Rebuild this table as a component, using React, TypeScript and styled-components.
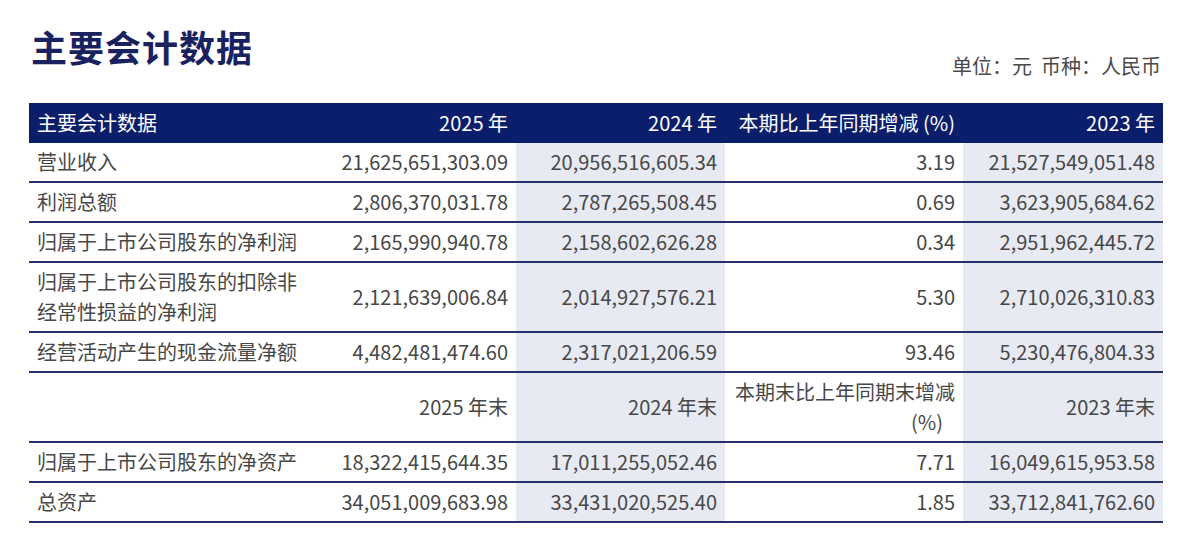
import React from "react";
import styled, { createGlobalStyle } from "styled-components";

const GlobalStyle = createGlobalStyle`
  html, body {
    margin: 0;
    padding: 0;
    background: #ffffff;
  }
  body {
    font-family: "Noto Sans CJK SC", "Noto Sans", sans-serif;
  }
`;

type Row = {
  label: string;
  values: [string, string, string, string];
  kind?: "sub";
};

const rows: Row[] = [
  { label: "营业收入", values: ["21,625,651,303.09", "20,956,516,605.34", "3.19", "21,527,549,051.48"] },
  { label: "利润总额", values: ["2,806,370,031.78", "2,787,265,508.45", "0.69", "3,623,905,684.62"] },
  { label: "归属于上市公司股东的净利润", values: ["2,165,990,940.78", "2,158,602,626.28", "0.34", "2,951,962,445.72"] },
  {
    label: "归属于上市公司股东的扣除非经常性损益的净利润",
    values: ["2,121,639,006.84", "2,014,927,576.21", "5.30", "2,710,026,310.83"],
  },
  { label: "经营活动产生的现金流量净额", values: ["4,482,481,474.60", "2,317,021,206.59", "93.46", "5,230,476,804.33"] },
  { label: "", values: ["2025 年末", "2024 年末", "本期末比上年同期末增减", "2023 年末"], kind: "sub" },
  { label: "归属于上市公司股东的净资产", values: ["18,322,415,644.35", "17,011,255,052.46", "7.71", "16,049,615,953.58"] },
  { label: "总资产", values: ["34,051,009,683.98", "33,431,020,525.40", "1.85", "33,712,841,762.60"] },
];

// shaded columns: 2024 and 2023
const shaded = [false, true, false, true];

export default function App() {
  return (
    <>
      <GlobalStyle />
      <Page>
        <TopBar>
          <Title>主要会计数据</Title>
          <UnitNote>单位：元&nbsp;&nbsp;币种：人民币</UnitNote>
        </TopBar>

        <DataTable>
          <colgroup>
            <col style={{ width: 286 }} />
            <col style={{ width: 201 }} />
            <col style={{ width: 209 }} />
            <col style={{ width: 238 }} />
            <col style={{ width: 200 }} />
          </colgroup>
          <thead>
            <tr>
              <HeadCell $align="left">主要会计数据</HeadCell>
              <HeadCell>2025 年</HeadCell>
              <HeadCell>2024 年</HeadCell>
              <HeadCell>本期比上年同期增减 (%)</HeadCell>
              <HeadCell>2023 年</HeadCell>
            </tr>
          </thead>
          <tbody>
            {rows.map((r, i) => (
              <tr key={i}>
                <LabelCell>{r.label}</LabelCell>
                {r.values.map((v, j) => (
                  <ValueCell key={j} $shaded={shaded[j]}>
                    {r.kind === "sub" && j === 2 ? (
                      <>
                        {v} <PctMark>(%)</PctMark>
                      </>
                    ) : (
                      v
                    )}
                  </ValueCell>
                ))}
              </tr>
            ))}
          </tbody>
        </DataTable>
      </Page>
    </>
  );
}

const Page = styled.div`
  width: 1192px;
  height: 539px;
  padding: 0 29px;
  box-sizing: border-box;
  overflow: hidden;
`;

const TopBar = styled.div`
  display: flex;
  justify-content: space-between;
  align-items: flex-end;
`;

const Title = styled.h1`
  margin: 24px 0 12px 2px;
  font-size: 36px;
  line-height: 44px;
  font-weight: 700;
  color: #19225f;
  letter-spacing: 1px;
`;

const UnitNote = styled.div`
  font-size: 20px;
  line-height: 28px;
  color: #4a4a4a;
  margin-right: 2px;
`;

const DataTable = styled.table`
  margin-top: 23px;
  width: 1134px;
  table-layout: fixed;
  border-collapse: collapse;
  font-size: 20px;
  line-height: 30px;
  color: #474747;
`;

const HeadCell = styled.th<{ $align?: "left" | "right" }>`
  background: #0b1e6b;
  color: #ffffff;
  font-weight: 400;
  text-align: ${(p) => p.$align || "right"};
  padding: 5px 8px;
  white-space: nowrap;
`;

const LabelCell = styled.td`
  padding: 4px 8px;
  text-align: left;
  border-bottom: 2px solid #26306b;
  vertical-align: middle;
`;

const ValueCell = styled.td<{ $shaded?: boolean }>`
  padding: 4px 8px;
  text-align: right;
  vertical-align: middle;
  background: ${(p) => (p.$shaded ? "#e7eaf2" : "transparent")};
  border-bottom: 2px solid #26306b;
`;

const PctMark = styled.span`
  margin-right: 12px;
`;
